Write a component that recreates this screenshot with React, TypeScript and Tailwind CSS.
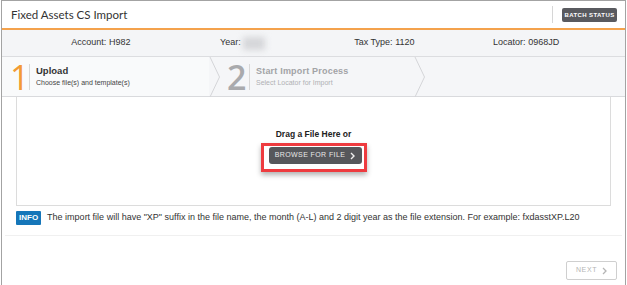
import React from 'react';

const Chevron = () => (
  <svg width="12" height="40" viewBox="0 0 12 40" className="shrink-0">
    <path d="M1 0 L10.5 20 L1 40" fill="none" stroke="#d4d5d8" strokeWidth="1" />
  </svg>
);

const App = () => {
  const details = [
    { label: 'Account:', value: 'H982' },
    { label: 'Year:', value: null },
    { label: 'Tax Type:', value: '1120' },
    { label: 'Locator:', value: '0968JD' }
  ];

  return (
    <div className="w-[627px] h-[285px] bg-white overflow-hidden font-['Liberation_Sans',Arial,sans-serif] text-[#333]">
      <div className="ml-[1px] mr-[1px] h-full border-x border-t border-[#a3a3a3] flex flex-col">

        {/* Header */}
        <div className="h-[29px] shrink-0 flex items-center justify-between pl-[9px] pr-[8px] border-b-2 border-[#f4a24c]">
          <span className="text-[11.5px] text-[#333] font-['Lato',sans-serif]">Fixed Assets CS Import</span>
          <div className="flex items-center h-full">
            <div className="w-px h-[17px] bg-[#d6d6d6] mr-[9px]"></div>
            <button className="h-[14px] w-[55px] rounded-[2px] bg-[#595a5f] text-white text-[6px] font-bold tracking-[0.4px] leading-none">
              BATCH STATUS
            </button>
          </div>
        </div>

        {/* Details row */}
        <div className="h-[27px] shrink-0 bg-[#f4f5f7] border-b border-[#dcdde0] grid grid-cols-4 px-[28px] items-center text-[9px] text-[#333]">
          {details.map((d, i) => (
            <div key={i} className="flex justify-center items-center">
              <span>{d.label}&nbsp;</span>
              {d.value ? (
                <span>{d.value}</span>
              ) : (
                <span className="inline-block w-[22px] h-[13px] bg-[#d5d6d9] blur-[3px]"></span>
              )}
            </div>
          ))}
        </div>

        {/* Steps */}
        <div className="h-[40px] shrink-0 bg-[#f5f6f8] border-b border-[#d9dadd] flex items-stretch">
          <div className="w-[207px] bg-[#f9fafb] flex items-center pl-[8px]">
            <span className="text-[34px] leading-none text-[#f39a34] font-['Open_Sans',sans-serif] w-[18px]">1</span>
            <div className="w-px h-[26px] bg-[#d8d8d8] ml-[1px] mr-[6px]"></div>
            <div className="flex flex-col">
              <span className="text-[9.5px] font-bold text-[#333] leading-[12px]">Upload</span>
              <span className="text-[7px] text-[#444] leading-[11px]">Choose file(s) and template(s)</span>
            </div>
          </div>
          <Chevron />
          <div className="w-[193px] flex items-center pl-[6px]">
            <span className="text-[34px] leading-none text-[#a9aaad] font-['Open_Sans',sans-serif] font-semibold w-[20px]">2</span>
            <div className="w-px h-[26px] bg-[#d8d8d8] ml-[2px] mr-[6px]"></div>
            <div className="flex flex-col">
              <span className="text-[9px] font-bold text-[#a2a3a6] leading-[12px] tracking-[0.2px]">Start Import Process</span>
              <span className="text-[7px] text-[#b0b1b4] leading-[11px]">Select Locator for Import</span>
            </div>
          </div>
          <Chevron />
          <div className="flex-1"></div>
        </div>

        {/* Drop zone */}
        <div className="mx-[14px] h-[109px] shrink-0 border-x border-b border-[#dcdcdc] flex flex-col items-center pt-[31px]">
          <span className="text-[8.5px] font-bold text-[#222] leading-[12px]">Drag a File Here or</span>
          <div className="mt-[3px] border-[3px] border-[#ee3b3f] pl-[5px] pr-[2px] pt-[1px] pb-[5px] shadow-[0_3px_5px_rgba(0,0,0,0.3)]">
            <button className="h-[17px] w-[93px] rounded-[3px] bg-[#56575b] text-[#e8e8e8] text-[7px] tracking-[0.4px] flex items-center justify-center gap-[5px]">
              BROWSE FOR FILE
              <svg width="5" height="8" viewBox="0 0 5 8">
                <path d="M1 1 L4 4 L1 7" fill="none" stroke="#f0f0f0" strokeWidth="1.4" />
              </svg>
            </button>
          </div>
        </div>

        {/* Info */}
        <div className="flex items-center mx-[14px] mt-[5px] h-[14px]">
          <span className="bg-[#1576b9] text-white text-[8px] font-bold px-[3px] h-[14px] flex items-center rounded-[1px]">INFO</span>
          <span className="ml-[6px] text-[9px] text-[#333] whitespace-nowrap">
            The import file will have "XP" suffix in the file name, the month (A-L) and 2 digit year as the file extension. For example: fxdasstXP.L20
          </span>
        </div>

        {/* Footer */}
        <div className="mt-[10px] mx-[3px] border-t border-[#f0f0f0] flex-1 flex justify-end pr-[5px] pt-[25px]">
          <button className="h-[19px] w-[51px] border border-[#cfcfcf] rounded-[2px] bg-white text-[#b5b5b5] text-[7px] tracking-[0.6px] flex items-center justify-center gap-[5px]">
            NEXT
            <svg width="5" height="8" viewBox="0 0 5 8">
              <path d="M1 1 L4 4 L1 7" fill="none" stroke="#b5b5b5" strokeWidth="1.3" />
            </svg>
          </button>
        </div>

      </div>
    </div>
  );
};

export default App;
